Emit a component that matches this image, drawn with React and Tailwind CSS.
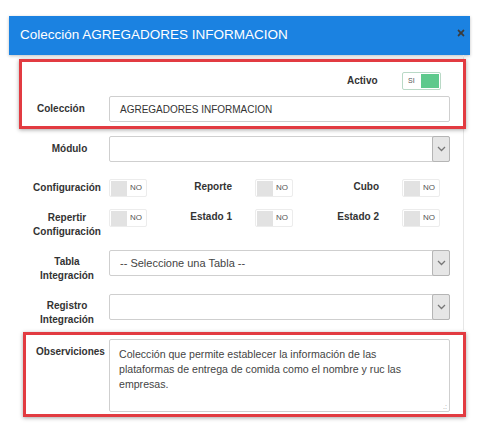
import React from "react";
import { FaTimes } from "react-icons/fa";

const font = { fontFamily: '"Liberation Sans", Arial, sans-serif' };

const Chevron = () => (
  <svg width="9" height="6" viewBox="0 0 9 6" fill="none">
    <path d="M1 1l3.5 3.5L8 1" stroke="#777" strokeWidth="1.3" />
  </svg>
);

const SelectBox = ({ value }) => (
  <div className="flex h-[26px] w-[341px] items-center rounded-[2px] border border-[#cfcfcf] bg-white">
    <span className="flex-1 pl-[10px] text-[11px] text-[#444]">{value}</span>
    <span className="mr-[-1px] flex h-[26px] w-[18px] items-center justify-center rounded-[2px] border border-[#b5b5b5] bg-[#e6e6e6]">
      <Chevron />
    </span>
  </div>
);

const Toggle = ({ on }) =>
  on ? (
    <div className="flex h-[18px] w-[39px] items-center rounded-[2px] border border-[#b9d9c6] bg-white p-[1px]">
      <span className="flex-1 pl-[4px] text-[7px] text-[#555]">SI</span>
      <span className="h-[14px] w-[18px] bg-[#5ec98c]"></span>
    </div>
  ) : (
    <div className="flex h-[18px] w-[38px] items-center rounded-[2px] border border-[#ececec] bg-white p-[1px]">
      <span className="h-[15px] w-[16px] bg-[#e2e2e2]"></span>
      <span className="flex-1 text-center text-[8px] text-[#555]">NO</span>
    </div>
  );

const Label = ({ children, className = "" }) => (
  <div className={`text-[10px] font-bold leading-[14px] text-[#333] ${className}`}>{children}</div>
);

const ToggleRow = ({ items, className = "" }) => (
  <div className={`flex items-start ${className}`}>
    <Label className="ml-[21px] w-[74px] pt-[2px] text-center">{items[0]}</Label>
    <div className="ml-[5px]"><Toggle /></div>
    <Label className="w-[85px] pt-[1px] text-right">{items[1]}</Label>
    <div className="ml-[23px]"><Toggle /></div>
    <Label className="w-[86px] pt-[1px] text-right">{items[2]}</Label>
    <div className="ml-[23px]"><Toggle /></div>
  </div>
);

export default function App() {
  return (
    <div className="h-[438px] w-[479px] overflow-hidden bg-white" style={font}>
      <div className="ml-[9px] pt-[16px]">
        <div className="flex h-[39px] w-[461px] items-center justify-between bg-[#1b82e1] pl-[11px] pr-[4px] shadow-[0_1px_3px_rgba(0,0,0,0.25)]">
          <span className="text-[13.5px] text-white">Colección AGREGADORES INFORMACION</span>
          <FaTimes className="mb-[6px] text-[10px] text-[#3b3b3b]" />
        </div>

        <div className="w-[455px] border-r border-[#e6e6e6] pt-[4px] pb-[3px]">
          {/* recuadro superior */}
          <div className="ml-[10px] w-[447px] border-[3px] border-[#e23b41] pb-[4px] shadow-[0_1px_4px_rgba(0,0,0,0.35)]">
            <div className="mt-[10px] flex items-center">
              <Label className="ml-[325px] w-[31px]">Activo</Label>
              <div className="ml-[24px]"><Toggle on /></div>
            </div>
            <div className="mt-[6px] flex items-center">
              <Label className="ml-[15px] w-[72px]">Colección</Label>
              <div className="flex h-[26px] w-[341px] items-center rounded-[2px] border border-[#cfcfcf] bg-white pl-[10px] text-[10px] text-[#333]">
                AGREGADORES INFORMACION
              </div>
            </div>
          </div>

          <div className="mt-[7px] flex items-center">
            <Label className="ml-[21px] w-[79px] text-center">Módulo</Label>
            <SelectBox value="" />
          </div>

          <ToggleRow className="mt-[17px]" items={["Configuración", "Reporte", "Cubo"]} />
          <ToggleRow className="mt-[12px]" items={[<>Repertir<br />Configuración</>, "Estado 1", "Estado 2"]} />

          <div className="mt-[11px] flex items-start">
            <Label className="ml-[21px] w-[74px] pt-[5px] text-center">Tabla<br />Integración</Label>
            <div className="ml-[5px]"><SelectBox value="-- Seleccione una Tabla --" /></div>
          </div>

          <div className="mt-[11px] flex items-start">
            <Label className="ml-[21px] w-[74px] pt-[5px] text-center">Registro<br />Integración</Label>
            <div className="ml-[5px]"><SelectBox value="" /></div>
          </div>
        </div>

        {/* recuadro inferior */}
        <div className="ml-[14px] mt-[2px] flex w-[443px] items-start border-[3px] border-[#e23b41] pt-[4px] pb-[2px] shadow-[0_1px_4px_rgba(0,0,0,0.35)]">
          <Label className="ml-[10px] w-[73px] pt-[6px]">Observiciones</Label>
          <div className="relative h-[73px] w-[341px] rounded-[2px] border border-[#cfcfcf] bg-white px-[9px] pt-[7px] text-[10.6px] leading-[15px] text-[#444]">
            Colección que permite establecer la información de las<br />
            plataformas de entrega de comida como el nombre y ruc las<br />
            empresas.
            <span className="absolute bottom-[1px] right-[2px] text-[7px] leading-none text-[#999]">.:</span>
          </div>
        </div>
      </div>
    </div>
  );
}
